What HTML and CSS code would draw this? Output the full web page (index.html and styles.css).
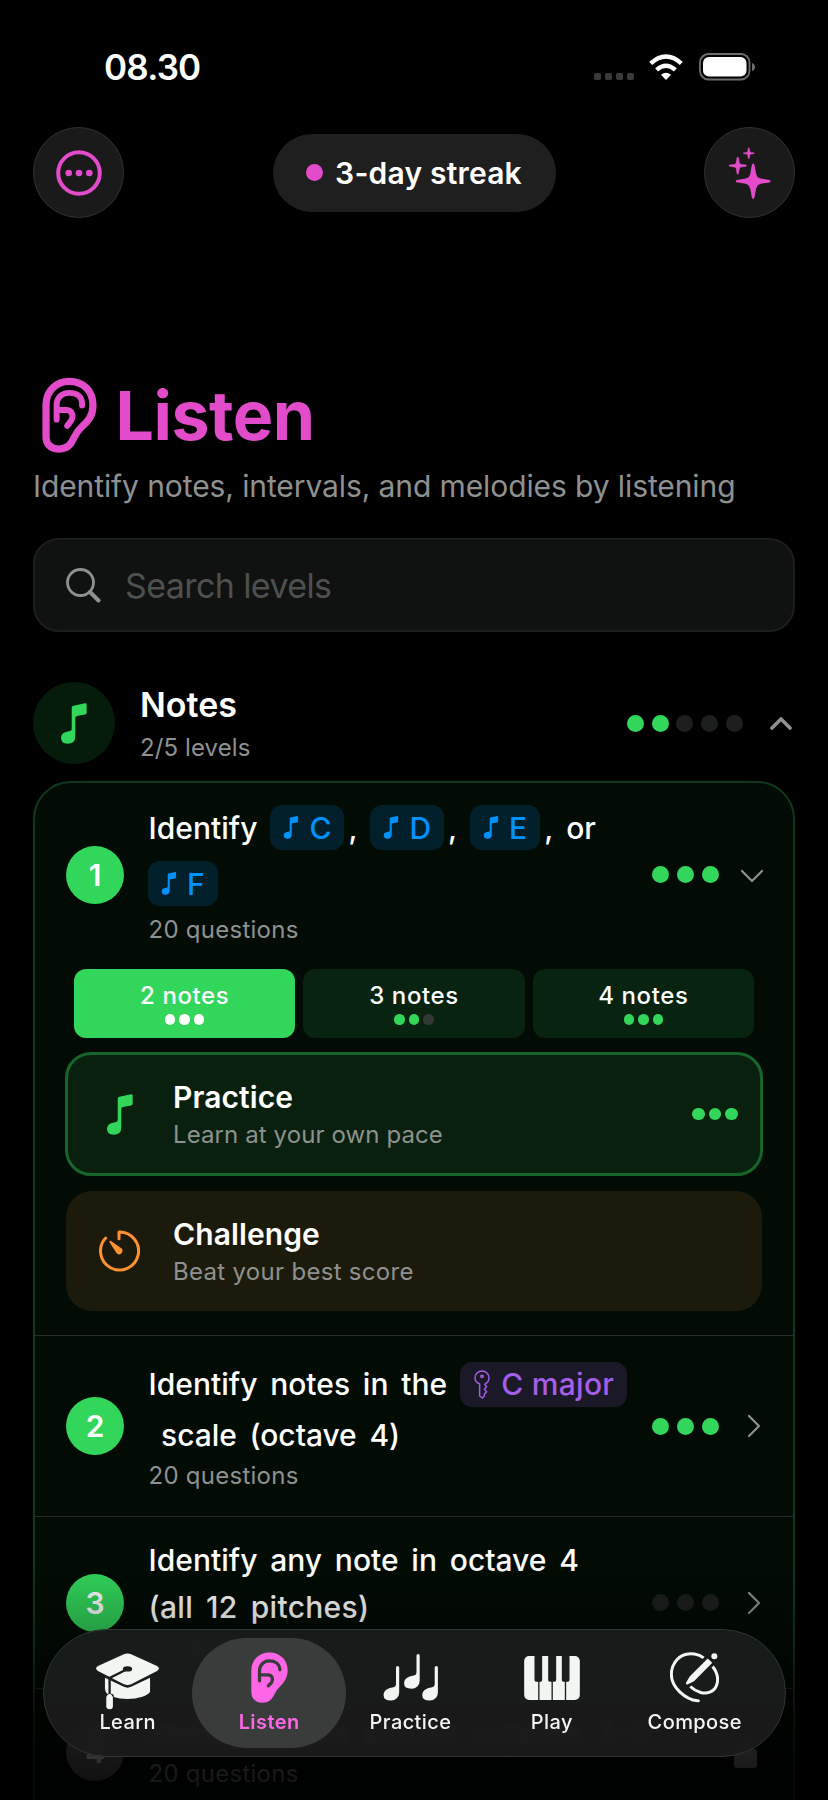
FILE: index.html
```html
<!DOCTYPE html>
<html lang="en">
<head>
<meta charset="utf-8">
<title>Listen</title>
<link rel="stylesheet" href="styles.css">
</head>
<body>
<svg width="0" height="0" class="defs" aria-hidden="true">
  <symbol id="note" viewBox="0 0 80 126"><path fill="currentColor" d="M33 14Q33 9 38 8L74 .5Q79 0 79 5V29Q79 34 74 35L49 40Q44 41 44 46V102Q44 125 20 125Q0 125 0 106Q1 91 18 88L28 86Q33 84 33 79Z"/></symbol>
  <symbol id="right" viewBox="0 0 14 24"><path d="M2 2l10 10L2 22" fill="none" stroke="currentColor" stroke-width="2.2" stroke-linecap="round" stroke-linejoin="round"/></symbol>
</svg>
<div class="screen">
  <div class="status">
    <span class="time">08.30</span>
    <div class="status-icons">
      <div class="cell"><i></i><i></i><i></i><i></i></div>
      <svg class="wifi" viewBox="0 0 34 26"><path fill="#fff" d="M17 26l-5-5.2q5-4.2 10 0z"/><path fill="none" stroke="#fff" stroke-width="4.4" d="M7.6 15.8q9.400-8.200 18.800 0M1.700 9.300q15.300-13.600 30.600 0"/></svg>
      <svg class="battery" viewBox="0 0 57 28"><rect x="1" y="1" width="49.500" height="25.500" rx="8.500" fill="none" stroke="#6c6e6d" stroke-width="1.800"/><rect x="4" y="4" width="43.500" height="19.500" rx="6" fill="#fff"/><path d="M53 10v8q3-1 3-4t-3-4z" fill="#6c6e6d"/></svg>
    </div>
  </div>
  <div class="top">
    <button class="round"><svg viewBox="0 0 46 46" width="46" height="46"><circle cx="23" cy="23" r="20.800" fill="none" stroke="#e24bc9" stroke-width="4"/><g fill="#e24bc9"><circle cx="12.700" cy="23" r="3.300"/><circle cx="23" cy="23" r="3.300"/><circle cx="33.300" cy="23" r="3.300"/></g></svg></button>
    <div class="streak"><i></i><span>3-day streak</span></div>
    <button class="round"><svg viewBox="0 0 54 54" width="54" height="54" fill="#e24bc9"><path d="M30.200 17.500c1.700 0 1.700 4 2.700 9s2.300 5.300 6.300 6.300 8.500.8 8.500 2.400-4.500 1.500-8.500 2.300-5.300 2-6.300 6.500-1 9-2.700 9-1.700-4.500-2.700-9-2.300-5.700-6.300-6.500-8.500-.8-8.500-2.300 4.500-1.400 8.500-2.400 5.300-1.300 6.300-6.300 1-9 2.700-9z"/><path stroke="#e24bc9" stroke-width=".6" d="M14.800 11c1.400 0 .8 5.500 2.100 6.800s6.700.7 6.700 1.900-5.400.6-6.700 1.900-.7 6.700-2.100 6.700-.8-5.400-2.100-6.700-6.700-.7-6.700-1.900 5.400-.6 6.700-1.900.7-6.800 2.100-6.800z"/><path stroke="#e24bc9" stroke-width=".5" d="M25.800 1.700c1.100 0 .5 3.300 1.400 4.200s4.200.4 4.200 1.300-3.300.4-4.200 1.300-.3 4.200-1.400 4.200-.5-3.300-1.400-4.200-4.200-.4-4.200-1.300 3.300-.4 4.200-1.300.3-4.200 1.400-4.200z"/></svg></button>
  </div>

  <h1><svg viewBox="0 0 166 230" fill="none" stroke="currentColor" stroke-linecap="round" stroke-linejoin="round"><path stroke-width="22" d="M12 85C12 40 45 13 82 13C125 13 154 42 154 86C154 118 138 135 120 151C98 171 100 183 86 202C74 218 60 218 49 218C27 218 12 203 12 182Z"/><path stroke-width="18" d="M121 86V80C121 58 104 48 83 48C60 48 44 62 44 84V129M44 100H72C92 100 96 118 88 132L76 148"/></svg><span>Listen</span></h1>
  <p class="sub">Identify notes, intervals, and melodies by listening</p>

  <div class="search"><svg viewBox="0 0 35 35" fill="none" stroke="#8f9190" stroke-linecap="round"><circle cx="14.500" cy="14.500" r="13" stroke-width="2.800"/><path d="M24 24l8.500 8.500" stroke-width="4"/></svg><span>Search levels</span></div>

  <div class="section">
    <div class="badge"><svg width="26" height="41"><use href="#note"/></svg></div>
    <div class="section-text"><h2>Notes</h2><p class="small">2/5 levels</p></div>
    <div class="dots"><i></i><i></i><i class="off"></i><i class="off"></i><i class="off"></i></div>
    <svg class="up" viewBox="0 0 22 13"><path d="M2 11l9-9 9 9" fill="none" stroke="#8f9190" stroke-width="3.600" stroke-linecap="round" stroke-linejoin="round"/></svg>
  </div>

  <div class="card">
    <div class="row first">
      <div class="num">1</div>
      <div class="body">
        <div class="line tall"><span>Identify</span><span class="chip"><svg><use href="#note"/></svg>C</span><span class="comma">,</span><span class="chip"><svg><use href="#note"/></svg>D</span><span class="comma">,</span><span class="chip"><svg><use href="#note"/></svg>E</span><span class="comma">,</span><span>or</span></div>
        <div class="line tall"><span class="chip lead"><svg><use href="#note"/></svg>F</span></div>
        <p class="small">20 questions</p>
      </div>
      <div class="dots"><i></i><i></i><i></i></div>
      <svg class="chev" viewBox="0 0 24 14"><path d="M2 2l10 10L22 2" fill="none" stroke="currentColor" stroke-width="2.200" stroke-linecap="round" stroke-linejoin="round"/></svg>
    </div>
    <div class="segments">
      <div class="seg on"><span>2 notes</span><div class="mini"><i></i><i></i><i></i></div></div>
      <div class="seg"><span>3 notes</span><div class="mini"><i></i><i></i><i class="off"></i></div></div>
      <div class="seg"><span>4 notes</span><div class="mini"><i></i><i></i><i></i></div></div>
    </div>
    <div class="mode practice">
      <div class="mode-icon"><svg width="26" height="41"><use href="#note"/></svg></div>
      <div class="mode-text"><h3>Practice</h3><p class="small">Learn at your own pace</p></div>
      <div class="dots mid"><i></i><i></i><i></i></div>
    </div>
    <div class="mode challenge">
      <div class="mode-icon"><svg width="42" height="42" viewBox="0 0 124 126"><path d="M22 24A57 57 0 1 0 62 6V26" fill="none" stroke="currentColor" stroke-width="9" stroke-linecap="round" stroke-linejoin="round"/><path fill="currentColor" d="M33 36Q33 31 38 33L69 55A10 10 0 0 1 55 70Z"/></svg></div>
      <div class="mode-text"><h3>Challenge</h3><p class="small">Beat your best score</p></div>
    </div>
    <div class="row two">
      <div class="num">2</div>
      <div class="body">
        <div class="line tall"><span>Identify notes in the</span><span class="chip key"><svg viewBox="0 0 48 85" fill="none" stroke="currentColor" stroke-width="4.500" stroke-linejoin="round"><path d="M17 41C7 37 3 31 3 23A21 21 0 0 1 45 23C45 31 41 37 32 42L38 49L31 57L38 64L31 72V77L25 83L17 77Z"/><circle cx="24" cy="18" r="3.500"/></svg><span>C major</span></span></div>
        <div class="line indent">scale (octave 4)</div>
        <p class="small">20 questions</p>
      </div>
      <div class="dots"><i></i><i></i><i></i></div>
      <svg class="chev r"><use href="#right"/></svg>
    </div>
    <div class="row three">
      <div class="num">3</div>
      <div class="body">
        <div class="line">Identify any note in octave 4</div>
        <div class="line loose">(all 12 pitches)</div>
        <p class="small">20 questions</p>
      </div>
      <div class="dots"><i class="off"></i><i class="off"></i><i class="off"></i></div>
      <svg class="chev r"><use href="#right"/></svg>
    </div>
    <div class="row four">
      <div class="num locked">4</div>
      <div class="body">
        <div class="line">Identify notes across octaves 3-5</div>
        <p class="small">20 questions</p>
      </div>
      <svg class="lock" viewBox="0 0 24 34"><path d="M6 15V9a6 6 0 0 1 12 0v6" fill="none" stroke="currentColor" stroke-width="3"/><rect x="0" y="14" width="23" height="19" rx="3" fill="currentColor"/></svg>
    </div>
  </div>

  <div class="fade"></div>
  <nav class="tabs">
    <div class="tab learn"><div class="ic"><svg width="63" height="57" viewBox="0 0 190 170"><path fill="currentColor" d="M27 74L84 101Q95 106 106 101L163 74V116Q160 124 140 131Q118 138 95 138Q72 138 50 131Q27 124 27 106Z"/><path fill="currentColor" d="M84 3Q95-2 106 3L184 38Q196 45 184 53L106 93Q95 98 84 93L6 53Q-6 45 6 38Z" stroke="#1a1f1d" stroke-width="10" paint-order="stroke"/><ellipse cx="95" cy="47" rx="14" ry="8" fill="#1a1f1d"/><path d="M92 49L41 74V128" fill="none" stroke="#1a1f1d" stroke-width="7"/><rect x="27" y="122" width="27" height="30" rx="8" fill="#1a1f1d"/><path fill="currentColor" d="M41 122Q51 126 51 134V160Q51 169 41 169Q31 169 31 160V134Q31 126 41 122Z"/></svg></div><span>Learn</span></div>
    <div class="tab active"><div class="ic"><svg width="37" height="51" viewBox="0 0 166 230" stroke-linecap="round" stroke-linejoin="round"><path fill="currentColor" stroke="currentColor" stroke-width="22" d="M12 85C12 40 45 13 82 13C125 13 154 42 154 86C154 118 138 135 120 151C98 171 100 183 86 202C74 218 60 218 49 218C27 218 12 203 12 182Z"/><path fill="none" stroke="#393c3a" stroke-width="15" d="M130 80C128 52 106 40 83 40C55 40 38 60 38 86V130M38 103H75C98 103 100 124 92 138L78 152"/></svg></div><span>Listen</span></div>
    <div class="tab"><div class="ic"><svg width="55" height="47" viewBox="0 0 55 47" fill="currentColor"><path id="quarter" d="M13 13.500a1.600 1.600 0 0 1 3.200 0V38.500A8 8 0 0 1 8 46.500Q.6 46.500.6 41.300C.6 36 5 34.200 9.500 33.500Q13 33 13 30Z"/><use href="#quarter" x="20.500" y="-11.800"/><use href="#quarter" x="38.700"/></svg></div><span>Practice</span></div>
    <div class="tab"><div class="ic"><svg width="56" height="44" viewBox="0 0 167 132"><rect width="167" height="132" rx="15" fill="currentColor"/><path fill="#1a1f1d" d="M31 0H54V72Q54 77 49 77H46V132H42V77H36Q31 77 31 72ZM72 0H96V72Q96 77 91 77H86V132H82V77H77Q72 77 72 72ZM113 0H136V72Q136 77 131 77H126V132H122V77H118Q113 77 113 72Z"/></svg></div><span>Play</span></div>
    <div class="tab compose"><div class="ic"><svg width="50" height="51" viewBox="0 0 150 152"><g fill="none" stroke="currentColor" stroke-width="9"><path d="M101 17C85 4 62 2 46 7C20 15 4 40 4 66C4 105 45 142 83 146"/><path d="M128 43C141 60 145 80 141 95C135 120 110 126 92 121C78 117 70 112 61 103"/></g><circle cx="85" cy="146" r="4.500" fill="currentColor"/><path fill="currentColor" d="M113 19L127 32L72 87L52 97Q46 98 48 92L59 73Z"/><circle cx="133" cy="12" r="9" fill="currentColor"/></svg></div><span>Compose</span></div>
  </nav>
</div>
</body>
</html>
```
FILE: styles.css
```css
* { box-sizing: border-box; }
html, body { margin: 0; background: #000; }
body { font-family: Inter, "Liberation Sans", sans-serif; color: #fff; }
h1, h2, h3, p { margin: 0; }
i { display: block; }
svg { display: block; flex: none; }
.defs { position: absolute; }
.screen { position: relative; width: 828px; height: 1800px; overflow: hidden; padding: 0 33px; display: flex; flex-direction: column; }

.status { height: 127px; flex: none; padding: 45px 39px 0 71px; display: flex; justify-content: space-between; }
.time { font-size: 35px; line-height: 44px; font-weight: 600; letter-spacing: -.8px; }
.status-icons { display: flex; height: 44px; align-items: center; }
.cell { display: flex; gap: 4px; margin: 18px 15px 0 0; }
.cell i { width: 7px; height: 7px; border-radius: 2px; background: #383b39; }
.wifi { width: 34px; height: 26px; margin-right: 16px; }
.battery { width: 57px; height: 28px; }

.top { flex: none; height: 91px; display: flex; justify-content: space-between; align-items: center; }
.round { width: 91px; height: 91px; border-radius: 50%; border: 1px solid #2e3231; background: #1a1a1a; padding: 0; display: flex; align-items: center; justify-content: center; }
.streak { width: 283px; height: 78px; border-radius: 39px; background: #1f1f1f; display: flex; align-items: center; justify-content: center; gap: 12px; font-size: 30px; font-weight: 600; letter-spacing: .2px; }
.streak i { width: 17px; height: 17px; border-radius: 50%; background: #e24bc9; }

h1 { flex: none; height: 76px; margin: 159px 0 0 8.500px; display: flex; align-items: center; gap: 19px; color: #e24bc9; font-size: 68px; font-weight: 700; letter-spacing: -.5px; }
h1 svg { width: 55px; height: 76px; }
.sub { flex: none; margin-top: 15px; line-height: 36px; font-size: 30px; color: #8f9190; white-space: nowrap; letter-spacing: -.1px; }
.search { flex: none; height: 94px; margin-top: 34px; border: 2px solid #1c1e1d; border-radius: 26px; background: #101211; display: flex; align-items: center; padding-left: 31px; gap: 24px; font-size: 34px; letter-spacing: -.6px; color: #4d504f; }
.search svg { width: 35px; height: 35px; }

.dots { display: flex; gap: 7.800px; }
.dots i { width: 17px; height: 17px; border-radius: 50%; background: #32d65b; }
.dots i.off { background: #1d1f1e; }
.small { font-size: 24px; color: #8f9190; letter-spacing: .1px; }

.section { flex: none; height: 82px; margin-top: 50px; display: flex; align-items: center; }
.badge { width: 82px; height: 82px; border-radius: 50%; background: #051c0b; color: #32d65b; display: flex; align-items: center; justify-content: center; }
.section-text { flex: 1; margin: 2px 0 0 25px; }
.section-text h2 { font-size: 34px; line-height: 40px; font-weight: 600; }
.section-text p { line-height: 30px; margin-top: 8px; }
.up { width: 22px; height: 13px; margin: 0 3px 0 27px; }

.card { flex: none; margin-top: 17px; height: 1060px; border: 2px solid #0e3a1b; border-radius: 38px; background: #020b04; }
.row { display: flex; align-items: center; padding-left: 31px; padding-right: 29px; border-top: 1px solid #282b29; }
.row.first { height: 183px; border-top: 0; }
.row.two { height: 181px; margin-top: 24px; }
.row.three { height: 172px; }
.row.four { height: 126px; }
.num { flex: none; width: 58px; height: 58px; border-radius: 50%; background: #32d65b; font-size: 30px; font-weight: 600; display: flex; align-items: center; justify-content: center; }
.num.locked { background: #6a6d6b; }
.body { flex: 1; margin-left: 24.600px; white-space: nowrap; }
.body p { height: 31px; line-height: 31px; margin-top: 7px; letter-spacing: .25px; }
.line { height: 36px; display: flex; align-items: center; font-size: 30px; font-weight: 500; word-spacing: 4.800px; }
.line + .line { margin-top: 11px; }
.line.tall { height: 46px; }
.line.tall + .line { margin-top: 10px; }
.line.indent { padding-left: 12.500px; letter-spacing: -.05px; }
.line.loose { letter-spacing: .3px; }
.chip { height: 45px; border-radius: 12px; background: #02202b; color: #0091ff; display: flex; align-items: center; gap: 10px; padding: 0 13px; margin-left: 13px; }
.chip svg { width: 16px; height: 23px; }
.comma { width: 26px; padding-left: 4px; }
.comma + .chip { margin-left: 0; }
.chip.lead { margin-left: -.6px; }
.chip.key { background: #1b1827; color: #a55ee8; letter-spacing: .3px; word-spacing: 0; gap: 11px; padding: 0 13px 0 14px; }
.chip.key svg { height: 29px; }
.chev { width: 24px; height: 14px; margin: 3px 0 0 21px; color: #8f9190; }
.chev.r { width: 14px; height: 24px; margin: 0 3px 0 28px; }
.lock { width: 24px; height: 34px; color: #8f9190; margin-right: 6px; }

.segments { display: grid; grid-template-columns: repeat(3, 1fr); gap: 8px; margin: 3px 39px 0; }
.seg { height: 69px; border-radius: 12px; background: #08230f; display: flex; flex-direction: column; align-items: center; padding-top: 12px; font-size: 24px; font-weight: 500; line-height: 29px; letter-spacing: .6px; }
.seg.on { background: #32d65b; }
.mini { display: flex; gap: 4px; margin-top: 4px; }
.mini i { width: 10.500px; height: 10.500px; border-radius: 50%; background: #32d65b; }
.mini i.off { background: #303a33; }
.seg.on .mini i { background: #fff; }

.mode { margin: 15px 31px 0; height: 120px; border-radius: 26px; display: flex; align-items: center; }
.mode-icon { width: 107px; padding-right: 2px; display: flex; justify-content: center; }
.mode.practice { height: 124px; margin: 14px 30px 0; border: 3px solid #16652b; background: #08200d; padding: 0 22px 0 0; }
.practice .mode-icon { color: #32d65b; width: 105px; }
.challenge { background: #1c1b0b; }
.challenge .mode-icon { color: #ff9230; }
.challenge .small { letter-spacing: .3px; }
.mode-text { flex: 1; }
.mode-text h3 { font-size: 30px; font-weight: 600; line-height: 36px; letter-spacing: .1px; }
.mode-text p { line-height: 30px; margin-top: 5px; }
.dots.mid { gap: 4px; }
.dots.mid i { width: 12.600px; height: 12.600px; }

.fade { position: absolute; left: 0; right: 0; bottom: 0; height: 240px; background: linear-gradient(rgba(0,0,0,0), rgba(0,0,0,.28) 32%, rgba(0,0,0,.7) 65%, rgba(0,0,0,.8) 82%, rgba(0,0,0,.88)); }
.tabs { position: absolute; left: 43px; top: 1629px; width: 743px; height: 128px; border-radius: 64px; border: 1.500px solid #2f3533; background: linear-gradient(rgba(24,29,27,.95) 55%, rgba(27,27,27,.93) 65%); backdrop-filter: blur(3px); display: grid; grid-template-columns: repeat(5, 141.400px); padding: 0 13px; align-items: center; color: #f2f5f2; font-size: 20px; font-weight: 500; letter-spacing: .4px; }
.tab { display: flex; flex-direction: column; align-items: center; margin: 0 -6px; height: 110px; border-radius: 55px; }
.tab .ic { height: 73px; padding-top: 6px; display: flex; align-items: center; }
.tab.learn .ic { padding-top: 14px; }
.tab.compose { padding-left: 3px; }
.tab span { line-height: 24px; margin-top: -1px; }
.tab.active { background: #393c3a; color: #ff66e6; font-weight: 600; }
```
